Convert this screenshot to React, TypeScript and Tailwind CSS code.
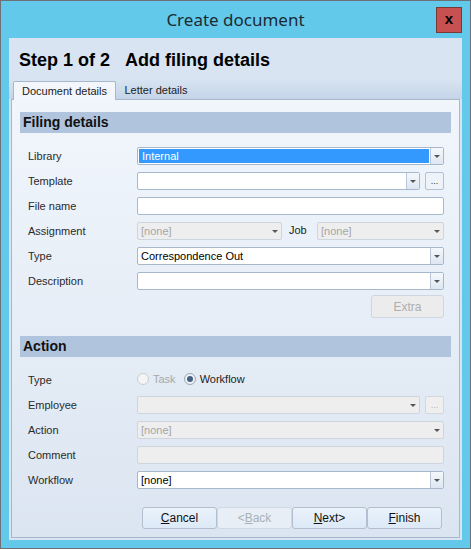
import React from 'react';

const font = { fontFamily: '"Liberation Sans", Arial, sans-serif' };

function Arrow({ disabled }: { disabled?: boolean }) {
  return (
    <div
      className={`flex w-[13px] shrink-0 items-center justify-center border-l ${
        disabled ? 'border-transparent' : 'border-[#b9c6d6] bg-gradient-to-b from-[#f4f8fc] to-[#dde7f2]'
      }`}
    >
      <div className="h-0 w-0 border-x-[3px] border-t-[3px] border-x-transparent border-t-[#555]" />
    </div>
  );
}

function Combo({
  value,
  selected,
  disabled,
  className = '',
}: {
  value?: string;
  selected?: boolean;
  disabled?: boolean;
  className?: string;
}) {
  return (
    <div
      className={`flex h-[18px] rounded-[2px] border ${
        disabled ? 'border-[#cfd5dc] bg-[#eeeeee]' : 'border-[#a8b8cc] bg-white'
      } ${className}`}
    >
      <div
        className={`flex flex-1 items-center overflow-hidden whitespace-nowrap px-[3px] text-[11px] ${
          selected ? 'm-px bg-[#3399ff] text-white' : disabled ? 'text-[#a6a6a6]' : 'text-black'
        }`}
      >
        {value}
      </div>
      <Arrow disabled={disabled} />
    </div>
  );
}

function TextBox({ disabled }: { disabled?: boolean }) {
  return (
    <div
      className={`h-[18px] rounded-[2px] border ${
        disabled ? 'border-[#cfd5dc] bg-[#eeeeee]' : 'border-[#a8b8cc] bg-white'
      }`}
    />
  );
}

function Dots({ disabled }: { disabled?: boolean }) {
  return (
    <div
      className={`flex h-[18px] w-[19px] shrink-0 items-end justify-center rounded-[2px] border pb-[3px] text-[9px] leading-none ${
        disabled ? 'border-[#d2d8de] bg-[#efefef] text-[#b0b0b0]' : 'border-[#b4c1d1] bg-[#eef3f9] text-[#333]'
      }`}
    >
      ...
    </div>
  );
}

function Row({ label, children }: { label: string; children: React.ReactNode }) {
  return (
    <div className="flex h-[25px] items-start">
      <div className="w-[109px] shrink-0 pt-[1px] text-[11px] text-[#2a2a2a]">{label}</div>
      <div className="flex-1">{children}</div>
    </div>
  );
}

function Section({ title }: { title: string }) {
  return (
    <div className="flex h-[21px] items-center bg-[#b0c4de] px-[3px] text-[14px] font-bold text-[#111]">{title}</div>
  );
}

function Btn({ children, disabled }: { children: React.ReactNode; disabled?: boolean }) {
  return (
    <div
      className={`flex h-[22px] w-[75px] items-center justify-center rounded-[3px] border text-[12px] ${
        disabled
          ? 'border-[#d0d8e2] bg-[#e8eef5] text-[#a8b0b8]'
          : 'border-[#b1bfd0] bg-gradient-to-b from-[#eaf2fb] to-[#dde9f7] text-[#111]'
      }`}
    >
      {children}
    </div>
  );
}

export default function App() {
  return (
    <div style={font} className="h-[550px] w-[471px] bg-white">
      <div className="flex h-[549px] w-[471px] flex-col border border-[#6b7177] bg-[#63c9ea] px-[8px] pb-[8px]">
        <div className="relative flex h-[37px] shrink-0 items-center justify-center">
          <span className="text-[17px] text-[#1d2a33]" style={{ fontFamily: '"Noto Sans", "Liberation Sans", sans-serif' }}>
            Create document
          </span>
          <div className="absolute right-[0px] top-[6px] flex h-[26px] w-[26px] items-center justify-center border border-[#7a3a33] bg-[#c75050] pb-[2px] text-[15px] font-bold text-black">
            x
          </div>
        </div>
        <div className="flex flex-1 flex-col bg-[#d8e4f1]">
          <div className="flex h-[41px] shrink-0 items-end px-[10px] pb-[5px] text-[18px] font-bold text-black">
            Step 1 of 2&nbsp;&nbsp;&nbsp;Add filing details
          </div>
          <div className="flex h-[20px] shrink-0 items-end bg-gradient-to-b from-[#d8e4f1] to-[#c4d4e7] px-[4px]">
            <div className="relative z-10 -mb-px flex h-[19px] w-[103px] items-center justify-center rounded-t-[2px] border border-b-0 border-[#a8b8cc] bg-[#f3f7fb] text-[11px] text-[#222]">
              Document details
            </div>
            <div className="flex h-[17px] w-[80px] items-center justify-center text-[11px] text-[#222]">Letter details</div>
          </div>
          <div className="mx-[2px] mb-[2px] flex flex-1 flex-col border border-[#a8b8cc] bg-gradient-to-b from-[#f1f6fc] to-[#dbe5f1] px-[8px] pt-[12px]">
            <Section title="Filing details" />
            <div className="pl-[8px] pr-[7px] pt-[14px]">
              <Row label="Library">
                <Combo value="Internal" selected />
              </Row>
              <Row label="Template">
                <div className="flex gap-[5px]">
                  <Combo className="flex-1" />
                  <Dots />
                </div>
              </Row>
              <Row label="File name">
                <TextBox />
              </Row>
              <Row label="Assignment">
                <div className="flex items-start">
                  <Combo value="[none]" disabled className="w-[145px]" />
                  <div className="w-[35px] pl-[7px] text-[11px] text-[#222]">Job</div>
                  <Combo value="[none]" disabled className="flex-1" />
                </div>
              </Row>
              <Row label="Type">
                <Combo value="Correspondence Out" />
              </Row>
              <Row label="Description">
                <Combo />
              </Row>
              <div className="flex justify-end">
                <div className="-mt-[2px] flex h-[23px] w-[73px] items-center justify-center rounded-[3px] border border-[#cfd6df] bg-[#ececec] text-[12px] text-[#aeaeae]">
                  Extra
                </div>
              </div>
            </div>
            <div className="mt-[18px]">
              <Section title="Action" />
            </div>
            <div className="pl-[8px] pr-[7px] pt-[14px]">
              <Row label="Type">
                <div className="flex items-center text-[11px]">
                  <div className="h-[12px] w-[12px] rounded-full border border-[#c8cdd3] bg-[#f4f4f4]" />
                  <span className="ml-[4px] text-[#a8a8a8]">Task</span>
                  <div className="ml-[8px] flex h-[12px] w-[12px] items-center justify-center rounded-full border border-[#9aa7b6] bg-[#eef2f6]">
                    <div className="h-[6px] w-[6px] rounded-full bg-[#46607f]" />
                  </div>
                  <span className="ml-[4px] text-[#222]">Workflow</span>
                </div>
              </Row>
              <Row label="Employee">
                <div className="flex gap-[5px]">
                  <Combo disabled className="flex-1" />
                  <Dots disabled />
                </div>
              </Row>
              <Row label="Action">
                <Combo value="[none]" disabled />
              </Row>
              <Row label="Comment">
                <TextBox disabled />
              </Row>
              <Row label="Workflow">
                <Combo value="[none]" />
              </Row>
            </div>
            <div className="flex justify-end pr-[9px] pt-[11px]">
              <Btn>
                <u>C</u>ancel
              </Btn>
              <Btn disabled>
                &lt;<u>B</u>ack
              </Btn>
              <Btn>
                <u>N</u>ext&gt;
              </Btn>
              <Btn>
                <u>F</u>inish
              </Btn>
            </div>
          </div>
        </div>
      </div>
    </div>
  );
}
